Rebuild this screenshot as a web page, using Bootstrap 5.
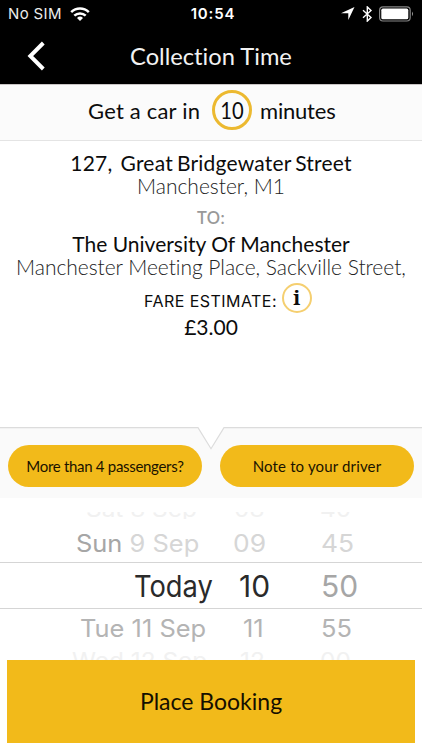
<!DOCTYPE html>
<html lang="en">
<head>
<meta charset="utf-8">
<meta name="viewport" content="width=device-width, initial-scale=1">
<title>Collection Time</title>
<link href="https://cdn.jsdelivr.net/npm/bootstrap@5.3.0/dist/css/bootstrap.min.css" rel="stylesheet">
<style>
  :root { --amber: #f2ba1a; }
  body { font-family: Lato, sans-serif; color: #0c0c0c; height: 750px; font-variant-ligatures: none; }
  .app { height: 750px; }
  .ui { font-family: Inter, sans-serif; }
  .gill { font-family: "Gill Sans", "Gill Sans MT", Lato, sans-serif; }
  .status { height: 28px; font-size: 15px; line-height: 28px; }
  .carrier { letter-spacing: .35px; color: #ececec; }
  .clock { letter-spacing: .85px; padding-left: 4px; }
  .titlebar { height: 56px; font-size: 23.7px; line-height: 56px; color: #f2f2f2; }
  .back { left: 27px; top: 13px; }
  .eta { height: 57px; background: #fbfbfb; border-top: 1px solid #c9c5c5; border-bottom: 1px solid #e4e4e4; font-size: 22px; padding: 0 0 5px 88px; }
  .e1 { width: 113px; letter-spacing: .2px; }
  .e2 { letter-spacing: -.2px; }
  .ring { width: 40px; height: 40px; border: 3px solid #ecb930; font-size: 24px; margin: 0 8px 0 11px; }
  .ring span { transform: scaleX(.84); }
  .trip { height: 286px; padding-top: 10px; }
  .place { font-size: 21px; line-height: 23px; }
  .p1 { word-spacing: -1.5px; letter-spacing: .2px; }
  .area { font-size: 21px; line-height: 24px; font-weight: 300; color: #222; }
  .a2 { letter-spacing: -.04px; }
  .to { font-size: 16.5px; line-height: 20px; margin: 10px 0 4px; color: #999; font-weight: 600; letter-spacing: .4px; }
  .fare { height: 31px; margin-top: 6px; padding-left: 144px; font-size: 16px; letter-spacing: .45px; }
  .info { width: 30px; height: 30px; border: 2px solid #f5cf70; margin: -5px 0 0 5px; font: bold 20px/1 "Noto Serif", "DejaVu Serif", serif; }
  .price { font-size: 21px; line-height: 22px; }
  .extras { height: 71px; padding: 18px 8px 0; }
  .notch { top: 0; left: 0; z-index: 0; }
  .pill { position: relative; z-index: 1; width: 194px; height: 42px; background: var(--amber); border-radius: 21px; font-size: 15px; color: #1a1300; padding: 0; border: 0; }
  .b1 { letter-spacing: -.3px; }
  .b2 { letter-spacing: .15px; }
  .picker { height: 162px; padding-top: 14px; overflow: hidden; }
  .slot { display: grid; white-space: pre; }
  .slot > span { transform-origin: 0 50%; transform: scaleX(1.06); }
  .s1 { height: 7px; line-height: 0; padding-left: 86px; grid-template-columns: 148px 86px 60px; font-size: 23px; color: #f1f1f1; overflow: hidden; }
  .s1 > span { margin-top: -3px; }
  .s2 { height: 43px; line-height: 50px; padding-left: 76px; grid-template-columns: 157px 88px 60px; font-size: 24px; color: #d6d6d6; }
  .s2 > span:not(:first-child) { transform: scaleX(1.1); }
  .s3 { height: 47px; line-height: 47px; padding-left: 134px; grid-template-columns: 105px 82px 60px; font-size: 30px; color: #2a2a2a; border-top: 1px solid #d5d5d5; border-bottom: 1px solid #d5d5d5; }
  .s3 > span:first-child { transform: scaleX(.91); }
  .s3 > span { transform: none; }
  .s4 { height: 43px; line-height: 40px; padding-left: 80px; grid-template-columns: 163px 78px 60px; font-size: 24px; color: #b4b4b4; }
  .s5 { height: 8px; line-height: 18px; padding-left: 72px; grid-template-columns: 168px 80px 60px; font-size: 23px; color: #f1f1f1; overflow: hidden; }
  .dim { color: #a6a6a6; }
  .book { width: 408px; height: 83px; margin-left: 7px; background: var(--amber); border: 0; border-radius: 0; font-size: 23px; color: #140f00; }
</style>
</head>
<body class="bg-white overflow-hidden">
<main class="app d-flex flex-column">
  <header class="bg-black text-white">
    <div class="status ui d-flex align-items-center position-relative">
      <span class="carrier ms-2">No SIM</span>
      <svg class="ms-2" width="20" height="14" viewBox="0 0 20 14" fill="none" stroke="#fff" stroke-width="2.5"><path d="M1.2 5.2a12.6 12.6 0 0 1 17.6 0M4.3 8.7a8.2 8.2 0 0 1 11.4 0"/><path d="M10 14 7 11a4.4 4.4 0 0 1 6 0z" fill="#fff" stroke="none"/></svg>
      <strong class="clock position-absolute start-50 translate-middle-x fw-semibold">10:54</strong>
      <svg class="ms-auto me-2" width="73" height="16" viewBox="0 0 73 16"><path d="M0 7.3 13.5 1 7.3 14V7.3z" fill="#fff"/><path d="m22 4.3 8 7.2-3.7 3.6V.9L30 4.5l-8 7.2" fill="none" stroke="#fff" stroke-width="1.4"/><rect x="38.6" y=".8" width="30.6" height="14.2" rx="3.4" fill="none" stroke="#858585" stroke-width="1.2"/><rect x="40.3" y="2.6" width="27" height="10.7" rx="1.6" fill="#fff"/><path d="M71 5.5q2 2.3 0 4.8z" fill="#999"/></svg>
    </div>
    <div class="titlebar text-center position-relative">
      <svg class="back position-absolute" width="19" height="30" viewBox="0 0 19 30" fill="none" stroke="#fff" stroke-width="3.9"><path d="M16.3 2 3.3 15l13 13"/></svg>
      <span class="heading">Collection Time</span>
    </div>
  </header>
  <section class="eta gill d-flex align-items-center text-nowrap">
    <span class="e1">Get a car in</span>
    <span class="ring rounded-circle d-flex align-items-center justify-content-center"><span>10</span></span>
    <span class="e2">minutes</span>
  </section>
  <section class="trip text-center text-nowrap">
    <div class="place"><span class="p1">127,&nbsp; Great Bridgewater Street</span></div>
    <div class="area"><span class="a1">Manchester, M1</span></div>
    <div class="to">TO:</div>
    <div class="place"><span class="p2">The University Of Manchester</span></div>
    <div class="area"><span class="a2">Manchester Meeting Place, Sackville Street,</span></div>
    <div class="fare ui d-flex align-items-center"><span>FARE ESTIMATE:</span><span class="info rounded-circle d-flex align-items-center justify-content-center">i</span></div>
    <div class="price">£3.00</div>
  </section>
  <section class="extras position-relative d-flex justify-content-between">
    <svg class="notch position-absolute" width="422" height="71" viewBox="0 0 422 71"><path d="M-2 .7h200l13 21 13-21h200V71H-2z" fill="#fafafa" stroke="#dcdcdc" stroke-width="1.2"/><path d="M0 71h422" stroke="#fafafa" stroke-width="3"/></svg>
    <button class="pill gill"><span class="b1">More than 4 passengers?</span></button>
    <button class="pill gill"><span class="b2">Note to your driver</span></button>
  </section>
  <section class="picker ui">
    <div class="slot s1"><span>Sat 8 Sep</span><span>08</span><span>40</span></div>
    <div class="slot s2"><span><span class="dim">Sun</span> 9 Sep</span><span>09</span><span>45</span></div>
    <div class="slot s3"><span>Today</span><span>10</span><span class="dim">50</span></div>
    <div class="slot s4"><span>Tue 11 Sep</span><span>11</span><span>55</span></div>
    <div class="slot s5"><span>Wed 12 Sep</span><span>12</span><span>00</span></div>
  </section>
  <button class="book gill"><span class="b3">Place Booking</span></button>
</main>
<script src="https://cdn.jsdelivr.net/npm/bootstrap@5.3.0/dist/js/bootstrap.bundle.min.js"></script>
</body>
</html>
